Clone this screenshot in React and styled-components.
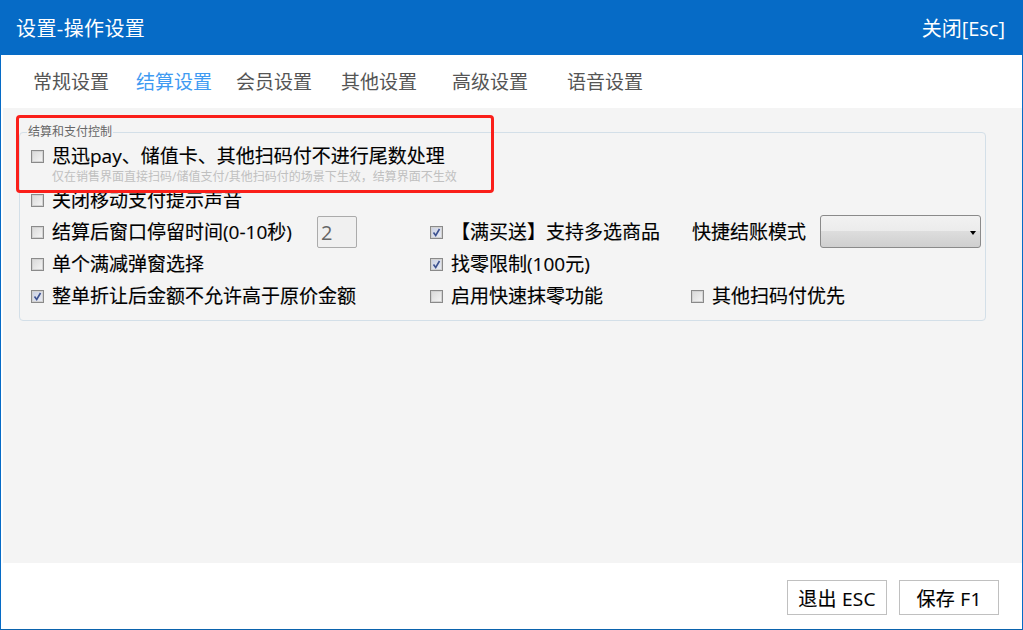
import React from "react";
import styled, { createGlobalStyle } from "styled-components";

const GlobalStyle = createGlobalStyle`
  html, body { margin: 0; padding: 0; background: #ffffff; }
  body {
    font-family: "Open Sans", "Noto Sans CJK SC", "Liberation Sans", sans-serif;
  }
`;

const Window = styled.div`
  position: relative;
  box-sizing: border-box;
  width: 1023px;
  height: 630px;
  display: flex;
  flex-direction: column;
  border-left: 1px solid #066bc6;
  border-right: 1px solid #066bc6;
  border-bottom: 1px solid #0b63ad;
  background: #ffffff;
  overflow: hidden;
`;

const TitleBar = styled.div`
  height: 55px;
  flex: none;
  margin: 0 -1px;
  padding: 0 18px 0 16px;
  display: flex;
  align-items: center;
  justify-content: space-between;
  background: #066bc6;
  color: #ffffff;
`;

const Title = styled.div`
  font-size: 20px;
  letter-spacing: 0.4px;
`;

const CloseText = styled.div`
  font-size: 20px;
`;

const Tabs = styled.div`
  height: 53px;
  flex: none;
  display: flex;
  align-items: center;
  padding-bottom: 1px;
  box-sizing: border-box;
`;

const Tab = styled.div`
  width: ${(p) => p.$w}px;
  flex: none;
  font-size: 19px;
  white-space: nowrap;
  color: ${(p) => (p.$active ? "#3f9bf2" : "#555555")};
  &:first-child { margin-left: 32px; }
`;

const Content = styled.div`
  flex: 1;
  margin: 0 0 0 2px;
  padding: 18px 36px 0 16px;
  background: #f4f4f4;
`;

const Group = styled.fieldset`
  box-sizing: border-box;
  margin: 0;
  padding: 0 0 8px 11px;
  height: 195px;
  min-width: 0;
  border: 1px solid #d3dfe8;
  border-radius: 4px;
`;

const GroupTitle = styled.legend`
  margin-left: -4px;
  padding: 0 1px;
  font-size: 12px;
  line-height: 12px;
  color: #666666;
`;

const FirstRow = styled.div`
  height: 26px;
  margin-top: 5px;
  display: flex;
  align-items: center;
`;

const Hint = styled.div`
  height: 15px;
  margin-left: 21px;
  font-size: 12px;
  line-height: 16px;
  color: #c0c0c0;
  white-space: nowrap;
`;

const Grid = styled.div`
  display: grid;
  grid-template-columns: 399px 261px 1fr;
  grid-auto-rows: 32px;
`;

const Cell = styled.div`
  display: flex;
  align-items: center;
  min-width: 0;
`;

const SingleRow = styled(Cell)`
  height: 32px;
`;

const Box = styled.span`
  box-sizing: border-box;
  flex: none;
  width: 13px;
  height: 13px;
  margin-right: 8px;
  display: flex;
  align-items: center;
  justify-content: center;
  border: 1px solid #8a8a8a;
  box-shadow: inset 0 0 0 1px #d2d2d2;
  background: ${(p) =>
    p.$on
      ? "linear-gradient(135deg, #c9cfe2, #eceef5)"
      : "linear-gradient(135deg, #d8d8d8, #f6f6f6)"};
`;

const Label = styled.span`
  font-size: 19px;
  line-height: 24px;
  color: #000000;
  white-space: nowrap;
  -webkit-text-stroke: 0.15px #000000;
`;

const NumberField = styled.div`
  box-sizing: border-box;
  width: 40px;
  height: 32px;
  margin-left: 25px;
  padding-left: 3px;
  display: flex;
  align-items: center;
  border: 1px solid #ababab;
  border-radius: 2px;
  background: #f0f0f0;
  color: #666666;
  font-size: 20px;
`;

const ModeLabel = styled(Label)`
  margin-left: 1px;
  margin-right: 14px;
`;

const Dropdown = styled.div`
  box-sizing: border-box;
  flex: none;
  position: relative;
  width: 161px;
  height: 33px;
  margin-bottom: 2px;
  border: 1px solid #8a8a8a;
  border-radius: 3px;
  background: linear-gradient(#f2f2f2 0%, #ebebeb 49%, #dddddd 50%, #cfcfcf 100%);
`;

const Caret = styled.span`
  position: absolute;
  right: 4px;
  top: 15px;
  border-left: 3px solid transparent;
  border-right: 3px solid transparent;
  border-top: 4px solid #000000;
`;

const Footer = styled.div`
  height: 66px;
  flex: none;
  display: flex;
  justify-content: flex-end;
  gap: 12px;
  padding: 17px 23px 0 0;
  box-sizing: border-box;
`;

const FootButton = styled.button`
  box-sizing: border-box;
  width: 100px;
  height: 35px;
  padding: 0;
  border: 1px solid #c0c0c0;
  background: #ffffff;
  color: #000000;
  font-family: inherit;
  font-size: 19px;
  letter-spacing: 0.3px;
  -webkit-text-stroke: 0.15px #000000;
`;

const RedMark = styled.div`
  position: absolute;
  left: 15px;
  top: 115px;
  width: 478px;
  height: 78px;
  box-sizing: border-box;
  border: 3px solid #fa1f1a;
  border-radius: 4px;
  pointer-events: none;
`;

const Check = ({ on }) => (
  <Box $on={on}>
    {on && (
      <svg width="9" height="9" viewBox="0 0 9 9">
        <path d="M1.5 4.5 L3.7 7.5 L7.5 1" fill="none" stroke="#3d5290" strokeWidth="1.6" />
      </svg>
    )}
  </Box>
);

const tabs = [
  { text: "常规设置", w: 103 },
  { text: "结算设置", w: 100, active: true },
  { text: "会员设置", w: 105 },
  { text: "其他设置", w: 111 },
  { text: "高级设置", w: 115 },
  { text: "语音设置", w: 80 },
];

export default function App() {
  return (
    <Window>
      <GlobalStyle />
      <TitleBar>
        <Title>设置-操作设置</Title>
        <CloseText>关闭[Esc]</CloseText>
      </TitleBar>
      <Tabs>
        {tabs.map((t) => (
          <Tab key={t.text} $w={t.w} $active={t.active}>
            {t.text}
          </Tab>
        ))}
      </Tabs>
      <Content>
        <Group>
          <GroupTitle>结算和支付控制</GroupTitle>
          <FirstRow>
            <Check />
            <Label>思迅pay、储值卡、其他扫码付不进行尾数处理</Label>
          </FirstRow>
          <Hint>仅在销售界面直接扫码/储值支付/其他扫码付的场景下生效，结算界面不生效</Hint>
          <SingleRow>
            <Check />
            <Label>关闭移动支付提示声音</Label>
          </SingleRow>
          <Grid>
            <Cell>
              <Check />
              <Label>结算后窗口停留时间(0-10秒)</Label>
              <NumberField>2</NumberField>
            </Cell>
            <Cell>
              <Check on />
              <Label>【满买送】支持多选商品</Label>
            </Cell>
            <Cell>
              <ModeLabel>快捷结账模式</ModeLabel>
              <Dropdown>
                <Caret />
              </Dropdown>
            </Cell>
            <Cell>
              <Check />
              <Label>单个满减弹窗选择</Label>
            </Cell>
            <Cell>
              <Check on />
              <Label>找零限制(100元)</Label>
            </Cell>
            <Cell />
            <Cell>
              <Check on />
              <Label>整单折让后金额不允许高于原价金额</Label>
            </Cell>
            <Cell>
              <Check />
              <Label>启用快速抹零功能</Label>
            </Cell>
            <Cell>
              <Check />
              <Label>其他扫码付优先</Label>
            </Cell>
          </Grid>
        </Group>
      </Content>
      <Footer>
        <FootButton>退出 ESC</FootButton>
        <FootButton>保存 F1</FootButton>
      </Footer>
      <RedMark />
    </Window>
  );
}
